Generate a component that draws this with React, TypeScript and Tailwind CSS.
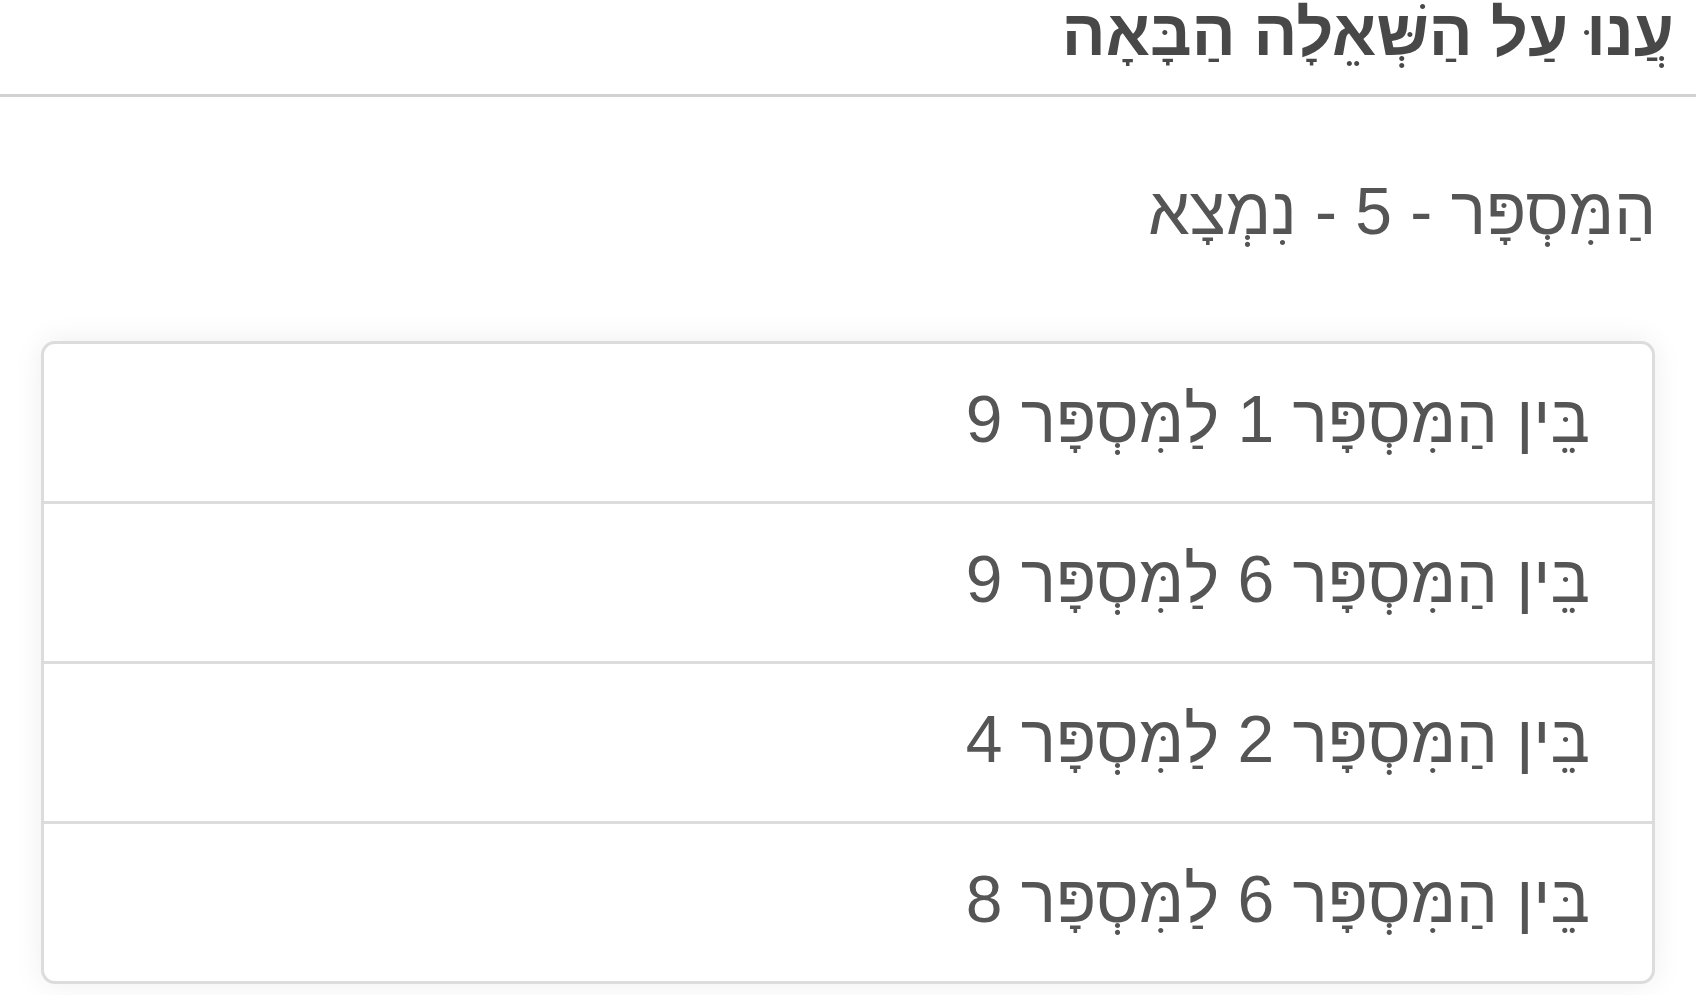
const options = [
  'בֵּין הַמִּסְפָּר 1 לַמִּסְפָּר 9',
  'בֵּין הַמִּסְפָּר 6 לַמִּסְפָּר 9',
  'בֵּין הַמִּסְפָּר 2 לַמִּסְפָּר 4',
  'בֵּין הַמִּסְפָּר 6 לַמִּסְפָּר 8',
];

export default function App() {
  return (
    <div
      dir="rtl"
      className="w-full h-[995px] overflow-hidden bg-white font-['Liberation_Sans',Arial,sans-serif]"
    >
      {/* Header */}
      <div className="h-[97px] border-b-[3px] border-[#d2d2d2] pr-[22px] pt-[1px]">
        <h1 className="-mt-[1px] text-[65px] leading-none font-bold text-[#484848]">
          עֲנוּ עַל הַשְּׁאֵלָה הַבָּאָה
        </h1>
      </div>

      {/* Question */}
      <p className="mt-[81px] pr-[40px] text-[66px] leading-none text-[#555555]">
        הַמִּסְפָּר - 5 - נִמְצָא
      </p>

      {/* Answers */}
      <div className="mx-[41px] mt-[97px] rounded-[14px] border-[3px] border-[#dcdcdc] bg-white shadow-[0_0_30px_rgba(0,0,0,0.07)] overflow-hidden">
        {options.map((opt, i) => (
          <div
            key={i}
            className={`flex items-center pr-[62px] pb-[8px] text-[66px] leading-none text-[#555555] ${
              i > 0 ? 'h-[160px] border-t-[3px] border-[#dcdcdc]' : 'h-[157px]'
            }`}
          >
            {opt}
          </div>
        ))}
      </div>
    </div>
  );
}
